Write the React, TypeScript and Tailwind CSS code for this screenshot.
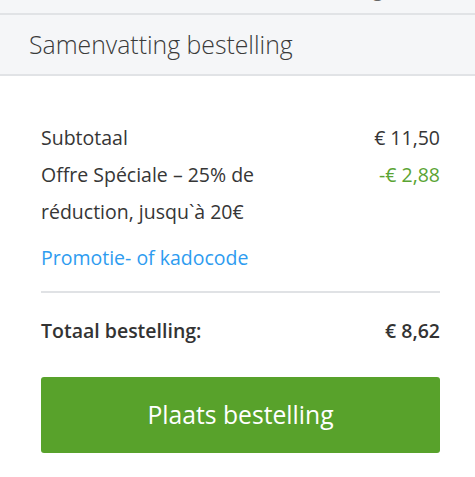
import React from "react";

export default function App() {
  return (
    <div className="w-[475px] h-[477px] bg-white overflow-hidden" style={{ fontFamily: '"Open Sans", sans-serif' }}>
      <div className="h-[15px] bg-[#f5f6f8] border-b-2 border-[#e1e3e6] overflow-hidden">
        <div className="mt-[-21px] h-[20px] leading-[20px] text-[19.5px] text-[#666] flex justify-end pr-[92px]">
          <span>Verzending</span>
        </div>
      </div>
      <div className="h-[61px] bg-[#f5f6f8] border-b-2 border-[#e1e3e6] pl-[29px] flex items-center">
        <span className="text-[24.8px] font-light text-[#3a3a3a]">Samenvatting bestelling</span>
      </div>
      <div className="pl-[41px] pr-[35px] pt-[43px]">
        <div className="text-[19.5px] leading-[37px] text-[#363636]">
          <div className="flex justify-between">
            <span>Subtotaal</span>
            <span>€ 11,50</span>
          </div>
          <div className="flex justify-between">
            <span className="w-[270px]">Offre Spéciale – 25% de réduction, jusqu`à 20€</span>
            <span className="text-[#5aa433]">-€ 2,88</span>
          </div>
          <div className="mt-[9px] text-[#2e9cf0]">Promotie- of kadocode</div>
        </div>
        <div className="mt-[15px] h-[2px] bg-[#e0e2e5]" />
        <div className="mt-[23px] flex justify-between text-[19.5px] leading-[30px] text-[#333]">
          <span className="font-semibold">Totaal bestelling:</span>
          <span className="font-semibold">€ 8,62</span>
        </div>
        <button className="mt-[31px] w-full h-[76px] rounded-[3px] bg-[#58a22b] text-white text-[24.7px] font-normal flex items-center justify-center">
          Plaats bestelling
        </button>
      </div>
    </div>
  );
}
